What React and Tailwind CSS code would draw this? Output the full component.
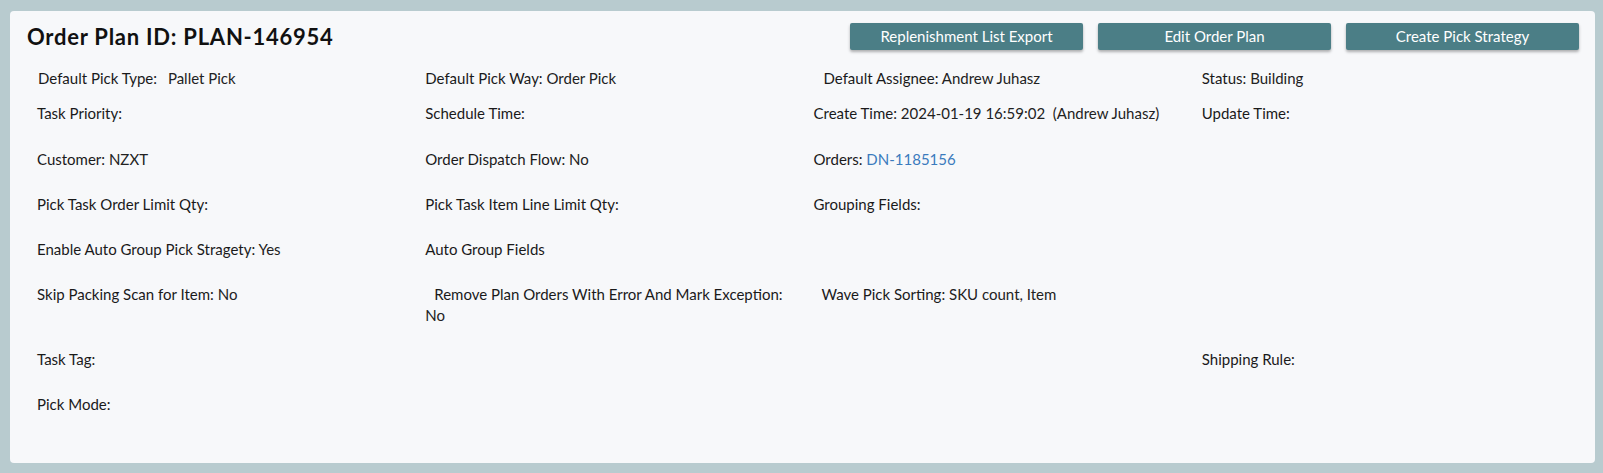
import React from "react";

const font = { fontFamily: "Lato, 'Open Sans', sans-serif" };

function Field({ label, value, link, extra = "" }) {
  return (
    <div className={`pl-[11px] leading-[20px] ${extra}`}>
      <span className="text-[#1a1a1a]">{label}</span>
      {value !== undefined && (
        <span className={link ? "text-[#3b7bbd]" : "text-[#222]"}>
          {" "}
          {value}
        </span>
      )}
    </div>
  );
}

export default function App() {
  return (
    <div className="min-h-[473px] bg-[#b8cbcf] pt-[11px] pl-[10px] pr-[8px] pb-[10px]" style={font}>
      <div className="bg-[#f7f8fa] rounded-[4px] h-[452px] px-4 pt-[12px] text-[15px] text-[#1a1a1a]">
        <div className="flex items-center justify-between h-[27px]">
          <h1 className="text-[22px] font-bold text-[#111] ml-[1px] leading-[27px] tracking-[0.75px]">Order Plan ID: PLAN-146954</h1>
          <div className="flex gap-[15px]">
            {["Replenishment List Export", "Edit Order Plan", "Create Pick Strategy"].map((t) => (
              <button
                key={t}
                className="w-[233px] h-[27px] bg-[#4b7e86] text-white text-[15px] rounded-[2px] shadow-[0_2px_3px_rgba(0,0,0,0.3)]"
              >
                {t}
              </button>
            ))}
          </div>
        </div>

        <div className="grid grid-cols-4 mt-[18px]">
          <Field label="Default Pick Type:" value={<span className="ml-[7px]">Pallet Pick</span>} extra="ml-[1px]" />
          <Field label="Default Pick Way:" value="Order Pick" />
          <Field label="Default Assignee:" value="Andrew Juhasz" extra="ml-[10px]" />
          <Field label="Status:" value="Building" />
        </div>

        <div className="grid grid-cols-4 mt-[15px]">
          <Field label="Task Priority:" />
          <Field label="Schedule Time:" />
          <Field label="Create Time:" value={<>2024-01-19 16:59:02&nbsp;&nbsp;(Andrew Juhasz)</>} />
          <Field label="Update Time:" />
        </div>

        <div className="grid grid-cols-4 mt-[26px]">
          <Field label="Customer:" value="NZXT" />
          <Field label="Order Dispatch Flow:" value="No" />
          <Field label="Orders:" value="DN-1185156" link />
          <div />
        </div>

        <div className="grid grid-cols-4 mt-[25px]">
          <Field label="Pick Task Order Limit Qty:" />
          <Field label="Pick Task Item Line Limit Qty:" />
          <Field label="Grouping Fields:" />
          <div />
        </div>

        <div className="grid grid-cols-4 mt-[25px]">
          <Field label="Enable Auto Group Pick Stragety:" value="Yes" />
          <Field label="Auto Group Fields" />
          <div />
          <div />
        </div>

        <div className="grid grid-cols-4 mt-[25px]">
          <Field label="Skip Packing Scan for Item:" value="No" />
          <div className="pl-[11px] leading-[20.5px]">
            <span className="ml-[9px]">Remove Plan Orders With Error And Mark Exception:</span>
            <br />
            <span className="text-[#222]">No</span>
          </div>
          <Field label="Wave Pick Sorting:" value="SKU count, Item" extra="ml-[8px]" />
          <div />
        </div>

        <div className="grid grid-cols-4 mt-[24px]">
          <Field label="Task Tag:" />
          <div />
          <div />
          <Field label="Shipping Rule:" />
        </div>

        <div className="grid grid-cols-4 mt-[25px]">
          <Field label="Pick Mode:" />
          <div />
          <div />
          <div />
        </div>
      </div>
    </div>
  );
}
